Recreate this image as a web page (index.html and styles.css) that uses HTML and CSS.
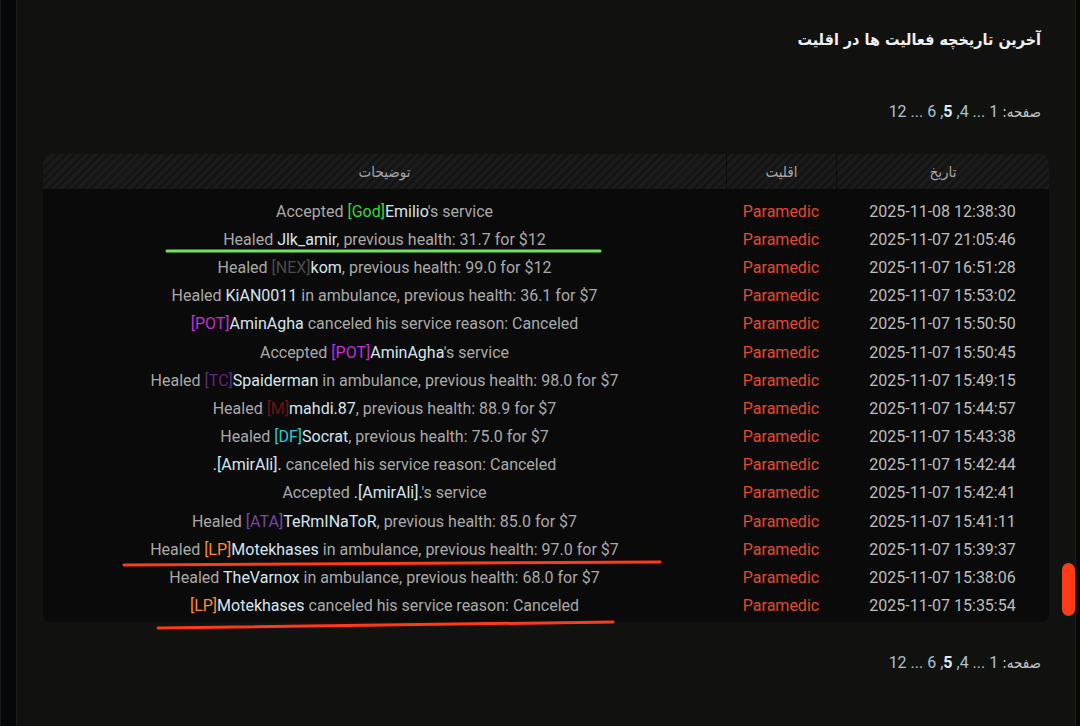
FILE: index.html
```html
<!DOCTYPE html>
<html lang="fa" dir="rtl">
<head>
<meta charset="utf-8">
<title>آخرین تاریخچه فعالیت ها در اقلیت</title>
<link rel="stylesheet" href="styles.css">
</head>
<body>
<div class="shell">
  <main class="panel">
    <h1 class="title">آخرین تاریخچه فعالیت ها در اقلیت</h1>
    <nav class="pager"><span class="pager-label">صفحه:</span> <a>1</a> ... <a>4</a>, <b>5</b>, <a>6</a> ... <a>12</a></nav>

    <div class="log">
      <div class="log-head">
        <div class="hc">تاریخ</div>
        <div class="hc">اقلیت</div>
        <div class="hc">توضیحات</div>
      </div>
      <div class="log-body">
        <div class="row"><div class="c-date" dir="ltr">2025-11-08 12:38:30</div><div class="c-fac">Paramedic</div><div class="c-desc" dir="ltr">Accepted <span class="t-god">[God]</span><span class="nm">Emilio</span>'s service</div></div>
        <div class="row"><div class="c-date" dir="ltr">2025-11-07 21:05:46</div><div class="c-fac">Paramedic</div><div class="c-desc" dir="ltr">Healed <span class="nm">Jlk_amir</span>, previous health: 31.7 for $12</div></div>
        <div class="row"><div class="c-date" dir="ltr">2025-11-07 16:51:28</div><div class="c-fac">Paramedic</div><div class="c-desc" dir="ltr">Healed <span class="t-nex">[NEX]</span><span class="nm">kom</span>, previous health: 99.0 for $12</div></div>
        <div class="row"><div class="c-date" dir="ltr">2025-11-07 15:53:02</div><div class="c-fac">Paramedic</div><div class="c-desc" dir="ltr">Healed <span class="nm">KiAN0011</span> in ambulance, previous health: 36.1 for $7</div></div>
        <div class="row"><div class="c-date" dir="ltr">2025-11-07 15:50:50</div><div class="c-fac">Paramedic</div><div class="c-desc" dir="ltr"><span class="t-pot">[POT]</span><span class="nm">AminAgha</span> canceled his service reason: Canceled</div></div>
        <div class="row"><div class="c-date" dir="ltr">2025-11-07 15:50:45</div><div class="c-fac">Paramedic</div><div class="c-desc" dir="ltr">Accepted <span class="t-pot">[POT]</span><span class="nm">AminAgha</span>'s service</div></div>
        <div class="row"><div class="c-date" dir="ltr">2025-11-07 15:49:15</div><div class="c-fac">Paramedic</div><div class="c-desc" dir="ltr">Healed <span class="t-tc">[TC]</span><span class="nm">Spaiderman</span> in ambulance, previous health: 98.0 for $7</div></div>
        <div class="row"><div class="c-date" dir="ltr">2025-11-07 15:44:57</div><div class="c-fac">Paramedic</div><div class="c-desc" dir="ltr">Healed <span class="t-m">[M]</span><span class="nm">mahdi.87</span>, previous health: 88.9 for $7</div></div>
        <div class="row"><div class="c-date" dir="ltr">2025-11-07 15:43:38</div><div class="c-fac">Paramedic</div><div class="c-desc" dir="ltr">Healed <span class="t-df">[DF]</span><span class="nm">Socrat</span>, previous health: 75.0 for $7</div></div>
        <div class="row"><div class="c-date" dir="ltr">2025-11-07 15:42:44</div><div class="c-fac">Paramedic</div><div class="c-desc" dir="ltr"><span class="nm">.[AmirAli].</span> canceled his service reason: Canceled</div></div>
        <div class="row"><div class="c-date" dir="ltr">2025-11-07 15:42:41</div><div class="c-fac">Paramedic</div><div class="c-desc" dir="ltr">Accepted <span class="nm">.[AmirAli].</span>'s service</div></div>
        <div class="row"><div class="c-date" dir="ltr">2025-11-07 15:41:11</div><div class="c-fac">Paramedic</div><div class="c-desc" dir="ltr">Healed <span class="t-ata">[ATA]</span><span class="nm">TeRmINaToR</span>, previous health: 85.0 for $7</div></div>
        <div class="row"><div class="c-date" dir="ltr">2025-11-07 15:39:37</div><div class="c-fac">Paramedic</div><div class="c-desc" dir="ltr">Healed <span class="t-lp">[LP]</span><span class="nm">Motekhases</span> in ambulance, previous health: 97.0 for $7</div></div>
        <div class="row"><div class="c-date" dir="ltr">2025-11-07 15:38:06</div><div class="c-fac">Paramedic</div><div class="c-desc" dir="ltr">Healed <span class="nm">TheVarnox</span> in ambulance, previous health: 68.0 for $7</div></div>
        <div class="row"><div class="c-date" dir="ltr">2025-11-07 15:35:54</div><div class="c-fac">Paramedic</div><div class="c-desc" dir="ltr"><span class="t-lp">[LP]</span><span class="nm">Motekhases</span> canceled his service reason: Canceled</div></div>
      </div>
    </div>

    <nav class="pager pager-bottom"><span class="pager-label">صفحه:</span> <a>1</a> ... <a>4</a>, <b>5</b>, <a>6</a> ... <a>12</a></nav>
  </main>
  <aside class="strip"></aside>
</div>

<svg class="marks" width="1080" height="726" viewBox="0 0 1080 726" aria-hidden="true">
  <line x1="167" y1="251" x2="600" y2="251" stroke="#6fe35c" stroke-width="3" stroke-linecap="round"/>
  <line x1="124" y1="565" x2="660" y2="562" stroke="#ff3a17" stroke-width="3" stroke-linecap="round"/>
  <line x1="158" y1="628" x2="613" y2="622" stroke="#ff3a17" stroke-width="3" stroke-linecap="round"/>
  <rect x="1062" y="563" width="13" height="53" rx="6.5" fill="#ff3a17"/>
</svg>
</body>
</html>
```

FILE: styles.css
```css
html, body {
  margin: 0;
  padding: 0;
  background: #060708;
}
body {
  width: 1080px;
  height: 726px;
  overflow: hidden;
  position: relative;
  font-family: Roboto, "DejaVu Sans", sans-serif;
  color: #b0b0b0;
}
.shell {
  display: flex;
  flex-direction: row;
  height: 726px;
}
.strip {
  width: 15px;
  background: #060708;
  border-left: 1px solid #17181a;
  flex: none;
}
.panel {
  flex: 1;
  background: #11110f;
  border-left: 1px solid #1c1c1c;
  border-right: 1px solid #1e1e1e;
  margin-right: 4px;
  padding: 0 26px 0 26px;
  box-sizing: border-box;
  height: 726px;
}
.title {
  margin: 0;
  padding: 28px 8px 0 0;
  font-family: "DejaVu Sans Condensed", "DejaVu Sans", sans-serif;
  font-size: 16px;
  line-height: 24px;
  font-weight: bold;
  color: #efefef;
}
.pager {
  padding: 0 8px 0 0;
  margin-top: 48px;
  height: 24px;
  line-height: 24px;
  font-size: 16px;
  color: #a9bfd0;
}
.pager-label {
  font-family: "DejaVu Sans Condensed", "DejaVu Sans", sans-serif;
  font-size: 15px;
  color: #c4c4c4;
}
.pager a { color: #a9c2d6; }
.pager b { color: #dde9f3; font-weight: bold; }
.pager-bottom { margin-top: 29px; }

.log {
  margin-top: 30px;
  border-radius: 7px;
  overflow: hidden;
  background: #0a0a0a;
}
.log-head {
  display: grid;
  grid-template-columns: 213px 110px 1fr;
  height: 35px;
  background: repeating-linear-gradient(135deg, #1b1b1b 0 3px, #141414 3px 6px);
}
.hc {
  display: flex;
  align-items: center;
  justify-content: center;
  font-family: "DejaVu Sans Condensed", "DejaVu Sans", sans-serif;
  font-size: 15px;
  color: #a6a6a6;
  border-left: 1px solid #0d0d0d;
}
.hc:last-child { border-left: none; }
.log-body {
  padding: 8px 0 2px;
}
.row {
  display: grid;
  grid-template-columns: 213px 110px 1fr;
  height: 28.2px;
  align-items: center;
  font-size: 16px;
}
.c-date { text-align: center; color: #bdbdbd; }
.c-fac { text-align: center; color: #e5492b; }
.c-desc { text-align: center; color: #a9a9a9; white-space: nowrap; }
.nm { color: #d6e5ef; }
.t-god { color: #35d838; }
.t-nex { color: #4b4b4b; }
.t-pot { color: #c42fd6; }
.t-tc { color: #5d2a7c; }
.t-m { color: #6b1414; }
.t-df { color: #35c6d6; }
.t-ata { color: #76489e; }
.t-lp { color: #ff8836; }

.marks {
  position: absolute;
  left: 0;
  top: 0;
  pointer-events: none;
}
```
